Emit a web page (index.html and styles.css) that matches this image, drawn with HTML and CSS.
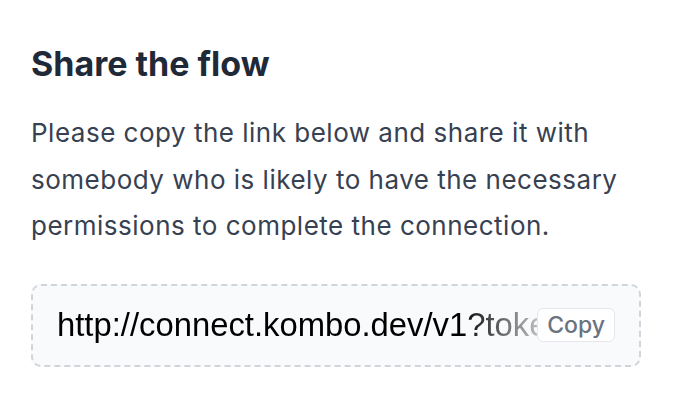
FILE: index.html
```html
<!DOCTYPE html>
<html>
<head>
<meta charset="utf-8">
<link rel="stylesheet" href="styles.css">
</head>
<body>
<main class="panel">
  <h2 class="title">Share the flow</h2>
  <p class="desc">Please copy the link below and share it with somebody who is likely to have the necessary permissions to complete the connection.</p>
  <div class="linkbox">
    <span class="url">http://connect.kombo.dev/v1?token=eyJhbGciOiJIUzI1NiIsInR5cCI6IkpXVCJ9</span>
    <button class="copy">Copy</button>
  </div>
</main>
</body>
</html>
```
FILE: styles.css
```css
html, body {
  margin: 0;
  background: #ffffff;
}
.panel {
  padding: 44px 39px 0 31px;
  font-family: Inter, "Noto Sans", sans-serif;
}
.title {
  margin: 0;
  font-size: 34px;
  line-height: 40px;
  font-weight: 700;
  color: #1f2937;
}
.desc {
  margin: 26px 0 0 0;
  font-size: 26px;
  letter-spacing: 0.5px;
  line-height: 46.5px;
  color: #374151;
  max-width: 610px;
}
.linkbox {
  margin-top: 34px;
  height: 83px;
  box-sizing: border-box;
  border: 2px dashed #d1d5db;
  border-radius: 10px;
  background: #f9fafb;
  display: flex;
  align-items: center;
  padding: 0 24px 0 24px;
}
.url {
  flex: 1;
  min-width: 0;
  white-space: nowrap;
  overflow: hidden;
  font-family: "Liberation Sans", Arial, sans-serif;
  font-size: 32.8px;
  line-height: 40px;
  color: #000000;
  -webkit-mask-image: linear-gradient(to right, #000 84%, rgba(0,0,0,0.25) 100%);
  mask-image: linear-gradient(to right, #000 84%, rgba(0,0,0,0.25) 100%);
}
.copy {
  flex: none;
  font-family: Inter, "Noto Sans", sans-serif;
  font-weight: 500;
  font-size: 23px;
  color: #6b7280;
  background: #ffffff;
  border: 1px solid #e5e7eb;
  border-radius: 6px;
  padding: 0 9px;
  height: 34px;
}
```
